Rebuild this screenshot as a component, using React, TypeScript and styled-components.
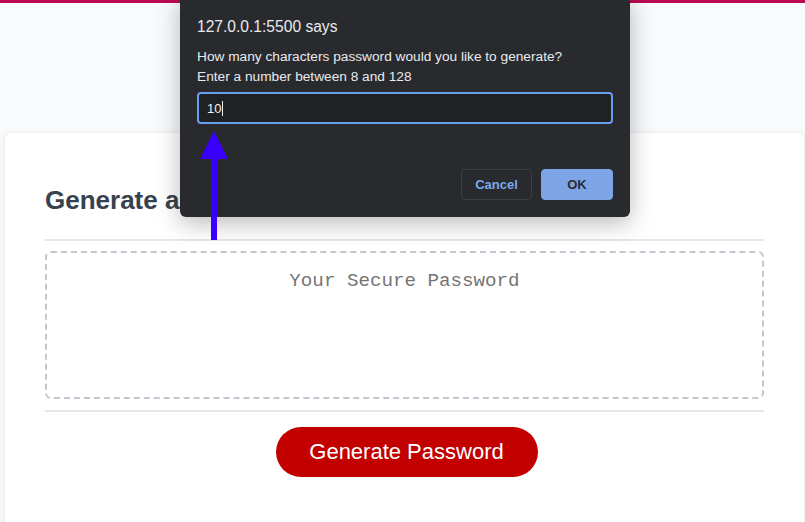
import React from "react";
import styled, { createGlobalStyle } from "styled-components";

const GlobalStyle = createGlobalStyle`
  html, body {
    margin: 0;
    padding: 0;
    background: #f9fafb;
    font-family: "Liberation Sans", Arial, sans-serif;
  }
  #root {
    min-height: 522px;
    overflow: hidden;
  }
`;

const Page = styled.div`
  position: relative;
  height: 522px;
  overflow: hidden;
`;

const Header = styled.header`
  height: 130px;
  border-top: 3px solid #bb0a52;
`;

const Card = styled.section`
  margin-left: 5px;
  width: 799px;
  min-height: 420px;
  background: #ffffff;
  border-radius: 6px;
  box-shadow: rgba(0, 0, 0, 0.1) 0 1px 6px 0;
  padding: 0 40px;
  box-sizing: border-box;
`;

const CardHeader = styled.div`
  padding: 52px 0 23px;
  border-bottom: 2px solid #e6e7e9;
`;

const Title = styled.h2`
  margin: 0;
  font-size: 26px;
  line-height: 31px;
  font-weight: 700;
  color: #37424e;
`;

const CardBody = styled.div`
  padding: 10px 0 11px;
  border-bottom: 2px solid #e6e7e9;
`;

const PasswordBox = styled.textarea`
  display: block;
  width: 100%;
  height: 148px;
  box-sizing: border-box;
  border: 2px dashed #c0c7cf;
  border-radius: 6px;
  padding: 17px 16px 15px;
  resize: none;
  font-family: "Liberation Mono", "Courier New", monospace;
  font-size: 19.2px;
  text-align: center;
  background: #fff;
  outline: none;

  &::placeholder {
    color: #757575;
  }
`;

const CardFooter = styled.div`
  display: flex;
  justify-content: center;
  padding-top: 15px;
`;

const GenerateButton = styled.button`
  width: 262px;
  height: 50px;
  border: none;
  border-radius: 25px;
  background: #c20000;
  color: #ffffff;
  font-family: "Liberation Sans", Arial, sans-serif;
  font-size: 22px;
  cursor: pointer;
  margin-left: 4px;
`;

/* native prompt() dialog, drawn over the page */
const Dialog = styled.div`
  position: absolute;
  left: 180px;
  top: -6px;
  width: 450px;
  height: 223px;
  background: #292a2d;
  border-radius: 6px;
  box-shadow: 0 6px 24px rgba(0, 0, 0, 0.28);
  padding: 23px 17px 0;
  box-sizing: border-box;
  display: flex;
  flex-direction: column;
  font-family: "Liberation Sans", Arial, sans-serif;
  color: #e8eaed;
`;

const DialogTitle = styled.div`
  font-size: 15.6px;
  line-height: 19px;
`;

const DialogText = styled.div`
  margin-top: 11px;
  font-size: 13.7px;
  line-height: 20px;
`;

const PromptInput = styled.div`
  margin-top: 5px;
  height: 32px;
  box-sizing: border-box;
  border: 2px solid #6a9cf0;
  border-radius: 4px;
  background: #202124;
  padding: 0 8px;
  display: flex;
  align-items: center;
  font-size: 13px;
  color: #f1f3f4;
`;

const Caret = styled.span`
  display: inline-block;
  width: 1px;
  height: 15px;
  background: #f1f3f4;
  margin-left: 1px;
`;

const DialogActions = styled.div`
  margin-top: 45px;
  display: flex;
  justify-content: flex-end;
  gap: 9px;
`;

const DialogButton = styled.button<{ $primary?: boolean }>`
  width: ${(p) => (p.$primary ? "72px" : "71px")};
  height: 31px;
  border-radius: 4px;
  font-family: "Liberation Sans", Arial, sans-serif;
  font-size: 13px;
  font-weight: 700;
  border: 1px solid ${(p) => (p.$primary ? "#7ca4e6" : "#3c3e42")};
  background: ${(p) => (p.$primary ? "#7ca4e6" : "transparent")};
  color: ${(p) => (p.$primary ? "#2a2c30" : "#7ca8f0")};
`;

const Arrow = styled.svg`
  position: absolute;
  left: 199px;
  top: 130px;
`;

export default function App() {
  return (
    <Page>
      <GlobalStyle />
      <Header />
      <Card>
        <CardHeader>
          <Title>Generate a Password</Title>
        </CardHeader>
        <CardBody>
          <PasswordBox readOnly placeholder="Your Secure Password" />
        </CardBody>
        <CardFooter>
          <GenerateButton>Generate Password</GenerateButton>
        </CardFooter>
      </Card>

      <Dialog>
        <DialogTitle>127.0.0.1:5500 says</DialogTitle>
        <DialogText>
          How many characters password would you like to generate?
          <br />
          Enter a number between 8 and 128
        </DialogText>
        <PromptInput>
          10
          <Caret />
        </PromptInput>
        <DialogActions>
          <DialogButton>Cancel</DialogButton>
          <DialogButton $primary>OK</DialogButton>
        </DialogActions>
      </Dialog>

      <Arrow width="32" height="112" viewBox="0 0 32 112">
        <polygon points="15,1 29,29 1,29" fill="#3a00ff" />
        <rect x="12" y="27" width="6" height="83" fill="#3a00ff" />
      </Arrow>
    </Page>
  );
}
